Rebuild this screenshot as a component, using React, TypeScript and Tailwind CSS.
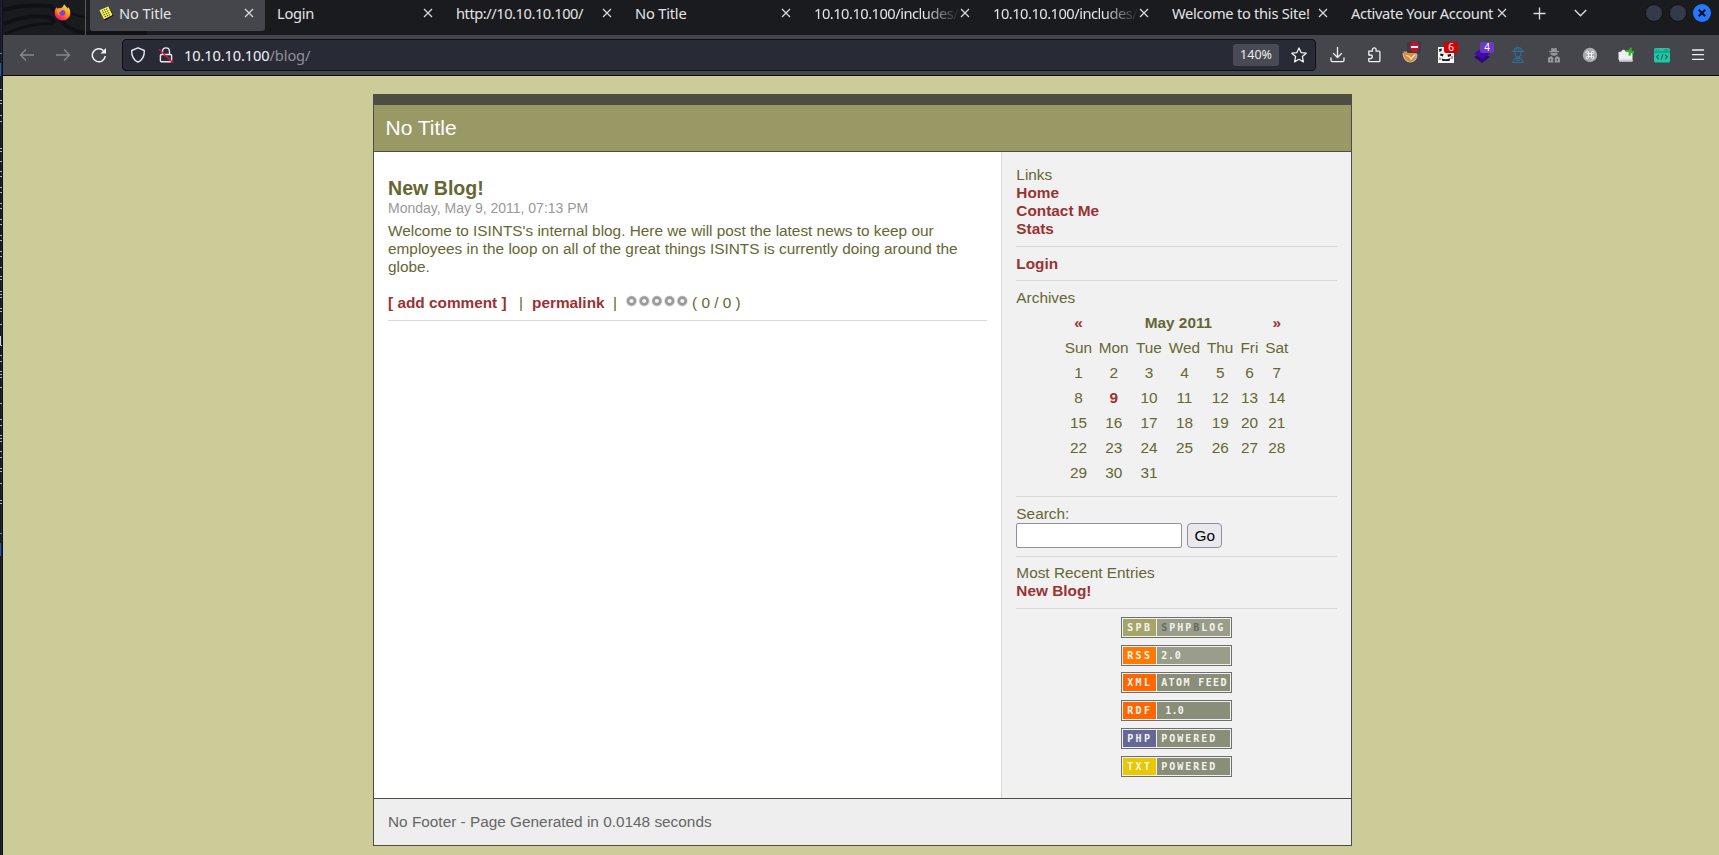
import React from "react";
import clsx from "clsx";

interface TabType {
  title: string;
  tracking: string;
  active?: boolean;
  fade?: boolean;
}

const tabs: TabType[] = [
  { title: "No Title", tracking: "tracking-[-0.1px]", active: true },
  { title: "Login", tracking: "tracking-[-0.3px]" },
  { title: "http://10.10.10.100/", tracking: "tracking-[-0.46px]" },
  { title: "No Title", tracking: "tracking-[-0.2px]" },
  { title: "10.10.10.100/includes/", tracking: "tracking-[-0.5px]", fade: true },
  { title: "10.10.10.100/includes/", tracking: "tracking-[-0.5px]", fade: true },
  { title: "Welcome to this Site!", tracking: "tracking-[-0.27px]" },
  { title: "Activate Your Account", tracking: "tracking-[-0.36px]" },
];

const weekDays = ["Sun", "Mon", "Tue", "Wed", "Thu", "Fri", "Sat"];
const days = Array.from({ length: 31 }, (_, i) => i + 1);

interface BadgeType {
  label: string;
  labelClass: string;
  text: React.ReactNode;
  textClass: string;
}

const badges: BadgeType[] = [
  {
    label: "SPB",
    labelClass: "bg-[#a5a56b]",
    text: (
      <>
        <span className="text-[#666960]">S</span>PHP<span className="text-[#666960]">B</span>LOG
      </>
    ),
    textClass: "bg-[#999d89] tracking-[2px]",
  },
  { label: "RSS", labelClass: "bg-[#ff7800]", text: "2.0", textClass: "bg-[#999d89] tracking-[0.8px]" },
  { label: "XML", labelClass: "bg-[#ff6600]", text: "ATOM FEED", textClass: "bg-[#898e79] tracking-[1.4px]" },
  {
    label: "RDF",
    labelClass: "bg-[#ff6600]",
    text: <span className="pl-1">1.0</span>,
    textClass: "bg-[#898e79] tracking-[0.3px]",
  },
  { label: "PHP", labelClass: "bg-[#666699]", text: "POWERED", textClass: "bg-[#898e79] tracking-[2px]" },
  { label: "TXT", labelClass: "bg-[#e8c800]", text: "POWERED", textClass: "bg-[#898e79] tracking-[2px]" },
];

// y positions of the light specks of the window behind
const specks = [
  89, 100, 103, 115, 121, 148, 151, 161, 171, 176, 187, 192, 203, 208, 219, 224, 235, 240, 251, 256, 267, 276, 279,
  291, 294, 297, 308, 311, 324, 345, 355, 361, 371, 374, 377, 387, 403, 419, 425, 435, 438, 441, 451, 457, 468, 471,
  483, 500, 503,
];

const WindowEdge = () => (
  <svg width="3" height="855" className="shrink-0" shapeRendering="crispEdges">
    <rect width="3" height="855" fill="#161925" />
    <rect x="1" width="1" height="855" fill="#202637" />
    <rect x="2" width="1" height="855" fill="#0c0f17" />
    {specks.map((y) => (
      <rect key={y} y={y} width="2" height="1" fill="#a9adb5" />
    ))}
    <rect y="53" width="2" height="1" fill="#4b9a8e" />
    <rect y="533" width="2" height="1" fill="#4b9a8e" />
    <rect y="63" width="1" height="13" fill="#1d59b5" />
    <rect y="543" width="1" height="13" fill="#1d59b5" />
    <rect y="336" width="1" height="9" fill="#d5d7db" />
  </svg>
);

const CloseIcon = () => (
  <svg width="10" height="10" viewBox="0 0 10 10" stroke="#dcdce0" strokeWidth="1.2" className="shrink-0">
    <path d="M1 1l8 8M9 1l-8 8" />
  </svg>
);

const FirefoxIcon = () => (
  <svg width="17" height="17" viewBox="0 0 17 17">
    <defs>
      <linearGradient id="fox" x1="0.85" y1="0" x2="0.25" y2="1">
        <stop offset="0" stopColor="#fff44f" />
        <stop offset="0.45" stopColor="#ff980e" />
        <stop offset="0.8" stopColor="#ff3647" />
        <stop offset="1" stopColor="#e31587" />
      </linearGradient>
    </defs>
    <path
      d="M10.2 .3c1 2 2.600 2.700 3.500 4.200.5-.1.4-1 .3-1.600 1.400 1.200 2.300 3.500 2.300 6 0 4.300-3.400 7.500-7.800 7.500S.7 13 .7 8.800C.7 6.500 1.300 4.500 2.600 3.200l.7 1.600C4.200 4.200 5 4 6 4.200 7.500 4 8.200 3.500 8.900 2.800 9.300 2 9.700 1.200 10.200.3z"
      fill="url(#fox)"
    />
    <circle cx="8.4" cy="8.8" r="2.9" fill="#7542e5" />
    <path d="M3 5c2-.8 4.200-.3 5.500 1.100L6.600 7.500c-.8.5-1.600.3-1.600 1.500 0 1 .6 2 1.500 2.400C4.500 11.300 2.500 9 3 5z" fill="#ff9a1e" />
  </svg>
);

const NoteFavicon = () => (
  <svg width="15" height="15" viewBox="0 0 15 15">
    <path d="M1.500 5L10 1.500l4.500 8-8.500 5z" fill="#0b0b05" />
    <path d="M.5 4.300L9.300 .5l4.200 8.500L5 13.300z" fill="#fbf95a" />
    <path
      d="M2.800 5.200l5.800-2.500M3.700 7.100l5.900-2.500M4.600 9l6-2.500M5.500 10.900l6-2.500"
      stroke="#3c3a08"
      strokeWidth="1"
      strokeDasharray="1.5 .8"
    />
  </svg>
);

const TabBar = () => (
  <div className="relative flex h-[35px] shrink-0 bg-[#1a1b1f] text-[14.67px] leading-[27px] text-[#e4e4e6]">
    <svg width="150" height="35" className="absolute left-0 top-0" fill="none" stroke="#101114" strokeWidth="4">
      <path d="M0 10Q20 4 48 6l6 8Q64 32 84 33h60" />
      <path d="M0 24Q24 14 46 17l6 5" />
      <path d="M2 34Q28 22 50 24" strokeWidth="3" />
      <path d="M62 12l22 6" strokeWidth="2" />
    </svg>
    <div className="relative flex w-[83px] shrink-0 items-start justify-end border-r border-[#5b5c61] pr-3.5 pt-1">
      <FirefoxIcon />
    </div>
    <div className="relative flex pl-1">
      {tabs.map((tab, i) => (
        <div
          key={i}
          className={clsx(
            "mr-1 flex h-[31px] w-[175px] items-start rounded-b-[3px] pr-[11px]",
            tab.active ? "bg-[#44464c] pl-[9px]" : "pl-2"
          )}
        >
          {tab.active && (
            <div className="mr-[5px] mt-1.5">
              <NoteFavicon />
            </div>
          )}
          <span
            className={clsx(
              "min-w-0 flex-1 whitespace-nowrap",
              tab.tracking,
              tab.fade && "mask-r-from-75% mask-r-to-100%"
            )}
          >
            {tab.title}
          </span>
          <div className="mt-2">
            <CloseIcon />
          </div>
        </div>
      ))}
    </div>
    <div className="flex gap-7 pl-[11px] pt-[7px]">
      <svg width="13" height="13" viewBox="0 0 13 13" stroke="#dcdce0" strokeWidth="1.3">
        <path d="M6.5 .5v12M.5 6.5h12" />
      </svg>
      <svg width="13" height="13" viewBox="0 0 13 13" stroke="#dcdce0" strokeWidth="1.4" fill="none">
        <path d="M.8 3l5.7 5.7L12.2 3" />
      </svg>
    </div>
    <div className="ml-auto flex gap-1.5 pr-2 pt-1">
      <div className="size-[18px] rounded-full border border-[#101116] bg-[#343a49]" />
      <div className="size-[18px] rounded-full border border-[#101116] bg-[#343a49]" />
      <div className="flex size-[18px] items-center justify-center rounded-full bg-[#2777ff]">
        <svg width="8" height="8" viewBox="0 0 8 8" stroke="#0d1220" strokeWidth="2">
          <path d="M.7 .7l6.6 6.6M7.3 .7L.7 7.3" />
        </svg>
      </div>
    </div>
  </div>
);

interface ToolbarSlotProps {
  children: React.ReactNode;
  badge?: string;
  badgeClass?: string;
}

const ToolbarSlot = ({ children, badge, badgeClass }: ToolbarSlotProps) => (
  <div className="relative flex w-9 items-center justify-center">
    <svg
      width="16"
      height="16"
      viewBox="0 0 16 16"
      fill="none"
      stroke="#f0f0f2"
      strokeWidth="1.3"
      strokeLinecap="round"
      strokeLinejoin="round"
      className="overflow-visible"
    >
      {children}
    </svg>
    {badge && (
      <span
        className={clsx(
          "absolute left-4 top-[3px] h-[11px] w-3.5 rounded-[2px] text-center text-[10px] leading-[11px] text-white",
          badgeClass
        )}
      >
        {badge}
      </span>
    )}
  </div>
);

const ExtensionIcons = () => (
  <div className="flex pl-1">
    {/* download */}
    <ToolbarSlot>
      <path d="M7.5 .5v9.500M3.500 6.500l4 4 4-4M1 11v2.300c0 .8.5 1.300 1.300 1.300h10.400c.8 0 1.300-.5 1.300-1.300V11" />
    </ToolbarSlot>
    {/* extensions */}
    <ToolbarSlot>
      <path d="M2.800 4.200H6.400V2.800C6.400 1.500 7.200.9 8.200.9s1.900.6 1.900 1.900v1.400H13c.6 0 .9.3.9.9v8.600c0 .6-.3.9-.9.9H3.700c-.6 0-.9-.3-.9-.9v-2.100h1.600c1.300 0 1.900-.8 1.900-1.800s-.6-1.800-1.900-1.800H2.800z" />
    </ToolbarSlot>
    {/* proxy switcher, turned off */}
    <ToolbarSlot>
      <g stroke="none">
        <path d="M.5 6.500C3 4 8 3 14 5.500l1.500 2.500c0 4.500-3.500 7.500-7.300 7.500S1 12.500.5 6.500z" fill="#b9b4a8" />
        <path d="M1.500 4l4 2 4-.5 4-.5v5c-1 3-3 4.500-5.500 4.500C4.500 14.500 2 11 1.500 4z" fill="#e88a32" />
        <path d="M4.500 8.500l3 1 1.500 2.500 3.500-4" stroke="#fff0d8" strokeWidth="1.2" />
        <rect x="5" y="-5" width="14" height="11" rx="1" fill="#3b3c40" />
        <circle cx="12.5" cy="0" r="5" fill="#c5102f" />
        <rect x="9" y="-1" width="7" height="2" fill="#fff" />
      </g>
    </ToolbarSlot>
    {/* face with counter */}
    <ToolbarSlot badge="6" badgeClass="bg-[#d70000]">
      <g stroke="none">
        <rect width="16" height="16" fill="#f6f6f6" />
        <path
          d="M1 2l3-.5L3.500 4 1.500 5zM2.500 6.500l3 .5-.5 2.500-3-1zM9.500 7.500l3.500-.5v2l-3 1zM3.500 11.500c3 1 6 1 9-.5l-1 3H4.500z"
          fill="#1c1c1c"
        />
        <path d="M13.500 9h1v3h-1zM1.500 10.500h1v2.500h-1z" fill="#555" />
      </g>
    </ToolbarSlot>
    {/* layers with counter */}
    <ToolbarSlot badge="4" badgeClass="bg-[#6a3cc0]">
      <g stroke="none">
        <path d="M0 10l8-5 8 5-8 6z" fill="#2b0a78" />
        <path d="M0 6.500l8-5.500 8 5.500-8 5.500z" fill="#4608ad" />
      </g>
    </ToolbarSlot>
    {/* user agent */}
    <ToolbarSlot>
      <g stroke="#2f6f98" strokeWidth="1.1">
        <path d="M4 3.500C4.300 .5 6 .7 8 .7s3.700-.2 4 2.800v1H4z" fill="#2f6f98" fillOpacity="0.4" />
        <path d="M2 4.500h12M4.800 5.500c.3 3 1.200 4.500 3.200 4.500s2.900-1.500 3.200-4.500" />
        <path d="M6.500 10v1.500h3V10M3 15.500c0-2.500 1.500-4 3.500-4h3c2 0 3.500 1.500 3.500 4M6 13.500h4M2.500 15.500h11" />
      </g>
    </ToolbarSlot>
    {/* spy */}
    <ToolbarSlot>
      <g stroke="none" fill="#96979a">
        <path d="M5.500 .8L8 1.500l2.500-.7L11 4h2v1.200H3V4h2zM4.500 6h7v1.500L9 8.800H7L4.500 7.500zM2 11l3-2 2.500 2-.5 2 .5 2.500H2zM14 11l-3-2-2.500 2 .5 2-.5 2.500H14z" />
        <path d="M4 12h1.200v1.500H4zM10.800 12H12v1.500h-1.200z" fill="#44464c" />
      </g>
    </ToolbarSlot>
    {/* command disc */}
    <ToolbarSlot>
      <circle cx="8" cy="8" r="7.2" fill="#a9aaad" stroke="none" />
      <path
        d="M6.500 5.300v5.400a1.200 1.200 0 1 1-1.200-1.200h5.400a1.200 1.200 0 1 1-1.200 1.200V5.300a1.200 1.200 0 1 1 1.200 1.200H5.300a1.200 1.200 0 1 1 1.200-1.200z"
        stroke="#f2f2f3"
        strokeWidth="1"
      />
    </ToolbarSlot>
    {/* add cookie */}
    <ToolbarSlot>
      <g stroke="none">
        <path d="M.5 5l3-.5C4 2 7 2 7.500 4.500H13l1.500 1.500v8.500H1.500L.5 12z" fill="#eeeff0" />
        <path d="M1.500 12.500h13v2h-13z" fill="#c9cbcd" />
        <path d="M11 .5h2.200v3h3v2.200h-3v3H11v-3H8V3.500h3z" fill="#2fb52b" transform="rotate(10 12 5)" />
      </g>
    </ToolbarSlot>
    {/* code window */}
    <ToolbarSlot>
      <rect y="1" width="16" height="14.5" rx="1.5" fill="#1fc7a5" stroke="none" />
      <path d="M.5 5h15" stroke="#167e70" strokeWidth="1" />
      <path d="M2 3h.5M4.500 3h.5M10 3h4" stroke="#167e70" strokeWidth="1" />
      <path d="M4.500 8L2.700 9.900l1.800 1.900M11.500 8l1.800 1.900-1.800 1.900M8.800 7.500L7.200 12.300" stroke="#14665e" strokeWidth="1.1" />
    </ToolbarSlot>
    {/* menu */}
    <ToolbarSlot>
      <path d="M2.500 3h11M2.500 7.700h11M2.500 12.400h11" />
    </ToolbarSlot>
  </div>
);

const Toolbar = () => (
  <div className="flex h-[41px] shrink-0 border-b border-[#0c0c10] bg-[#44464c] py-1 pr-[3px]">
    <div className="flex w-[119px] items-center pl-4">
      <svg width="16" height="16" viewBox="0 0 16 16" fill="none" stroke="#87888c" strokeWidth="1.3">
        <path d="M15 8H1.500M7 2.500L1.500 8 7 13.500" />
      </svg>
      <svg width="16" height="16" viewBox="0 0 16 16" fill="none" stroke="#87888c" strokeWidth="1.3" className="ml-5">
        <path d="M1 8h13.500M9 2.500L14.500 8 9 13.500" />
      </svg>
      <svg width="16" height="16" viewBox="0 0 16 16" fill="none" stroke="#f4f4f5" strokeWidth="1.5" className="ml-5">
        <path d="M14.300 9A6.500 6.500 0 1 1 12.500 3.700" />
        <path d="M9.500 6.500H15V1z" fill="#f4f4f5" stroke="none" />
      </svg>
    </div>
    <div className="flex h-8 flex-1 items-center rounded border border-[#0d0e13] bg-[#282a36] pr-2">
      <svg width="16" height="16" viewBox="0 0 16 16" fill="none" stroke="#e8e8ea" strokeWidth="1.4" className="ml-[7px]">
        <path d="M8 .8l6.300 2.700C14.500 8.500 12.500 13 8 15.200 3.500 13 1.500 8.500 1.700 3.500z" strokeLinejoin="round" />
      </svg>
      <svg width="16" height="16" viewBox="0 0 16 16" fill="none" className="ml-3">
        <path
          d="M4.500 7.500V4.500C4.500 2.500 5.800.9 8 .9s3.500 1.600 3.500 3.600v3M3.500 7.500h9c.7 0 1.100.4 1.100 1.100v5c0 .7-.4 1.100-1.100 1.100h-9c-.7 0-1.100-.4-1.100-1.100v-5c0-.7.4-1.100 1.100-1.100z"
          stroke="#e8e8ea"
          strokeWidth="1.4"
        />
        <path d="M1 2.200l14 13.500" stroke="#e8123f" strokeWidth="1.4" />
      </svg>
      <div className="ml-2.5 text-[14.67px] leading-5 tracking-[-0.14px] text-[#f2f2f4]">
        10.10.10.100<span className="text-[#8e8f96]">/blog/</span>
      </div>
      <div className="ml-auto flex h-[22px] w-[46px] items-center justify-center rounded-[3px] bg-[#484a54] text-[12.5px] text-[#ececee]">
        140%
      </div>
      <svg
        width="16"
        height="16"
        viewBox="0 0 16 16"
        fill="none"
        stroke="#f0f0f2"
        strokeWidth="1.3"
        strokeLinejoin="round"
        className="ml-3"
      >
        <path d="M8 .9l2.100 4.700 5.100.6-3.800 3.400 1 5.300L8 12.300l-4.400 2.600 1-5.300L.8 6.200l5.100-.6z" />
      </svg>
    </div>
    <ExtensionIcons />
  </div>
);

const StarRating = () => (
  <svg width="62" height="12" viewBox="0 0 62 12" className="mt-px">
    {[5.5, 18.2, 30.9, 43.6, 56.3].map((cx) => (
      <g key={cx}>
        <circle cx={cx} cy="6" r="5.6" fill="#dcdcdc" />
        <circle cx={cx} cy="6" r="3.4" fill="#f4f4f4" stroke="#9a9a9a" strokeWidth="2.6" />
      </g>
    ))}
  </svg>
);

const Post = () => (
  <article className="w-[628px] px-3.5 pt-[25px]">
    <h2 className="text-[19.6px] font-bold leading-[22px]">New Blog!</h2>
    <p className="pt-px text-[14px] leading-[17px] text-[#999]">Monday, May 9, 2011, 07:13 PM</p>
    <p className="mt-[5px] whitespace-nowrap">
      Welcome to ISINTS's internal blog. Here we will post the latest news to keep our
      <br />
      employees in the loop on all of the great things ISINTS is currently doing around the
      <br />
      globe.
    </p>
    <div className="mt-[18px] flex h-[27px] border-b border-[#d9d9d9]">
      <a className="w-[131px] font-bold text-[#993333]">[ add comment ]</a>
      <span className="w-[13px]">|</span>
      <a className="w-[81px] font-bold text-[#993333]">permalink</a>
      <span className="w-[13px]">|</span>
      <StarRating />
      <span className="ml-1">( 0 / 0 )</span>
    </div>
  </article>
);

const Calendar = () => (
  <div className="mx-auto mt-[3px] grid w-[230px] grid-cols-[33.5px_37px_33.5px_37.5px_34px_24.5px_30px] text-center leading-[25px]">
    <a className="font-bold text-[#993333]">«</a>
    <span className="col-span-5 font-bold">May 2011</span>
    <a className="font-bold text-[#993333]">»</a>
    {weekDays.map((day) => (
      <span key={day}>{day}</span>
    ))}
    {days.map((day) => (
      <span key={day} className={clsx(day === 9 && "font-bold text-[#993333]")}>
        {day}
      </span>
    ))}
  </div>
);

const Badge = ({ label, labelClass, text, textClass }: BadgeType) => (
  <div className="flex h-[21px] w-[111px] gap-px border border-[#6f6f6f] bg-[#f0f0ec] p-px font-['DejaVu_Sans_Mono',monospace] text-[10px] font-bold leading-[17px] text-[#f4f4ee]">
    <span className={clsx("w-[33px] whitespace-nowrap pl-1 tracking-[2.4px]", labelClass)}>{label}</span>
    <span className={clsx("flex-1 whitespace-nowrap pl-1", textClass)}>{text}</span>
  </div>
);

const Divider = () => <hr className="h-px border-0 bg-[#d9d9d9]" />;

const Sidebar = () => (
  <aside className="w-[350px] border-l border-[#d9d9d9] bg-[#f1f1f1] px-3.5 pt-3.5">
    <div className="flex flex-col pb-2">
      <span>Links</span>
      <a className="font-bold text-[#993333]">Home</a>
      <a className="font-bold text-[#993333]">Contact Me</a>
      <a className="font-bold text-[#993333]">Stats</a>
    </div>
    <Divider />
    <div className="h-[33px] pt-2">
      <a className="font-bold text-[#993333]">Login</a>
    </div>
    <Divider />
    <div className="h-[215px] pt-2">
      <p>Archives</p>
      <Calendar />
    </div>
    <Divider />
    <div className="h-[59px] pt-2">
      <p>Search:</p>
      <div className="flex gap-[5px]">
        <input className="h-[25px] w-[166px] rounded-[2px] border border-[#8f8f9d] bg-white" />
        <button className="h-[25px] w-[35px] rounded-[4px] border border-[#8f8f9d] bg-[#e9e9ed] text-black">Go</button>
      </div>
    </div>
    <Divider />
    <div className="flex h-[51px] flex-col pt-[7px]">
      <span>Most Recent Entries</span>
      <a className="font-bold text-[#993333]">New Blog!</a>
    </div>
    <Divider />
    <div className="flex flex-col items-center gap-[6.74px] pt-2">
      {badges.map((badge, i) => (
        <Badge key={i} {...badge} />
      ))}
    </div>
  </aside>
);

const BlogPage = () => (
  <div className="flex-1 bg-[#cccc99] pt-[18px] font-['Liberation_Sans',Arial,sans-serif] text-[15.36px] leading-[18px] text-[#666633]">
    <div className="ml-[370px] w-[979px] border border-[#4d4d44]">
      <div className="h-2.5 bg-[#4d4d44]" />
      <header className="h-[47px] border-b border-[#4d4d44] bg-[#999966] pl-[11.5px] text-[21px] leading-[46px] text-white">
        No Title
      </header>
      <div className="flex h-[646px] bg-white">
        <Post />
        <Sidebar />
      </div>
      <footer className="h-[47px] border-t border-[#4d4d44] bg-[#eee] pl-3.5 leading-[46px] text-[#666]">
        No Footer - Page Generated in 0.0148 seconds
      </footer>
    </div>
  </div>
);

const App = () => {
  return (
    <div className="flex h-[855px] w-[1719px] overflow-hidden font-['Noto_Sans',sans-serif]">
      <WindowEdge />
      <div className="flex min-w-0 flex-1 flex-col">
        <TabBar />
        <Toolbar />
        <BlogPage />
      </div>
    </div>
  );
};

export default App;
